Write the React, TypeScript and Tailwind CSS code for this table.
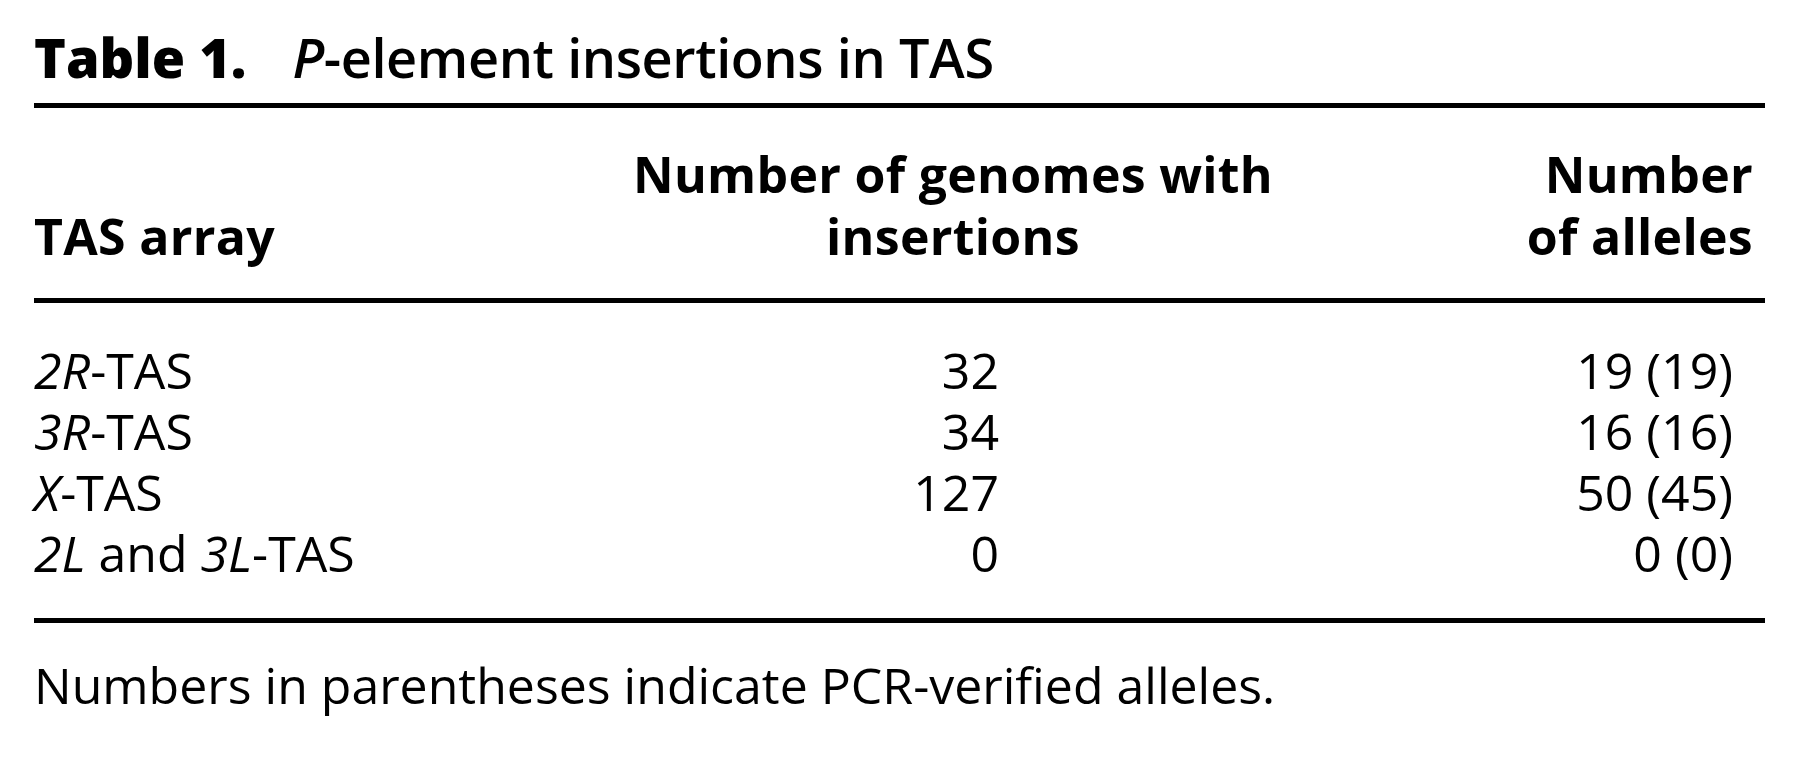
export default function App() {
  const rows = [
    { name: <><i>2R</i>-TAS</>, genomes: "32", alleles: "19 (19)" },
    { name: <><i>3R</i>-TAS</>, genomes: "34", alleles: "16 (16)" },
    { name: <><i>X</i>-TAS</>, genomes: "127", alleles: "50 (45)" },
    { name: <><i>2L</i> and <i>3L</i>-TAS</>, genomes: "0", alleles: "0 (0)" },
  ]

  return (
    <div className="w-[1800px] h-[757px] bg-white text-black font-['Open_Sans',_'Noto_Sans',_sans-serif] pl-[34px] pr-[35px]">
      {/* caption */}
      <div className="pt-[27px] text-[54px] leading-[60px] font-semibold whitespace-nowrap">
        <span className="font-extrabold">Table 1.</span>
        <span className="inline-block w-[46px]"></span>
        <span className="tracking-[-0.4px]">
          <i>P</i>-element insertions in TAS
        </span>
      </div>

      <div className="mt-[16px] h-[5px] bg-black"></div>

      {/* header */}
      <div className="grid grid-cols-[566px_706px_1fr] pt-[35px] text-[50px] leading-[62px] font-bold tracking-[0.3px]">
        <div className="flex items-end">TAS array</div>
        <div className="text-center">
          Number of genomes with
          <br />
          insertions
        </div>
        <div className="text-right pr-[12px]">
          Number
          <br />
          of alleles
        </div>
      </div>

      <div className="mt-[31px] h-[5px] bg-black"></div>

      {/* body */}
      <div className="pt-[37px] pb-[34px] text-[50px] leading-[61px]">
        {rows.map((r, i) => (
          <div key={i} className="grid grid-cols-[566px_706px_1fr]">
            <div className="whitespace-nowrap">{r.name}</div>
            <div className="text-right pr-[307px]">{r.genomes}</div>
            <div className="text-right pr-[32px]">{r.alleles}</div>
          </div>
        ))}
      </div>

      <div className="h-[5px] bg-black"></div>

      <p className="pt-[32px] text-[50px] leading-[61px]">
        Numbers in parentheses indicate PCR-verified alleles.
      </p>
    </div>
  )
}
